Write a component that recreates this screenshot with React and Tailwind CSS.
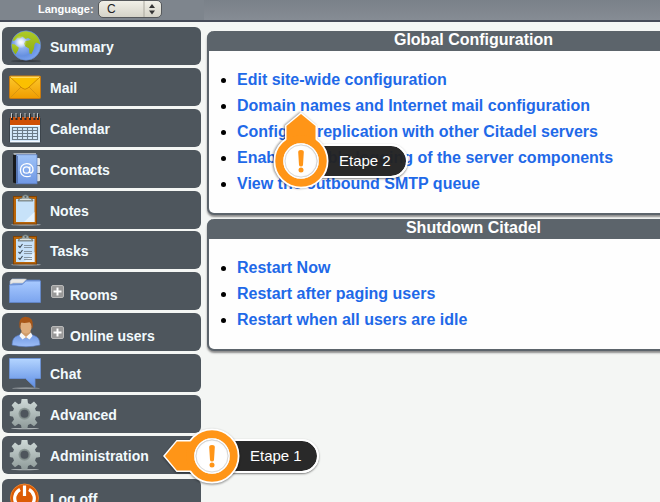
// src/App.jsx
import React from "react";

/* ---------- Sidebar icons ---------- */

const SummaryIcon = () => (
  <svg viewBox="0 0 32 32" className="size-8 shrink-0" aria-hidden="true">
    <defs>
      <radialGradient id="sea" cx="0.36" cy="0.4" r="0.65">
        <stop offset="0" stopColor="#dfe8fb" />
        <stop offset="0.3" stopColor="#8fb0ee" />
        <stop offset="0.7" stopColor="#6690e0" />
        <stop offset="1" stopColor="#7ba4ee" />
      </radialGradient>
      <radialGradient id="glare">
        <stop offset="0" stopColor="#ffffff" stopOpacity="0.95" />
        <stop offset="1" stopColor="#ffffff" stopOpacity="0" />
      </radialGradient>
      <linearGradient id="land" x1="0" y1="0" x2="0" y2="1">
        <stop offset="0" stopColor="#aecb28" />
        <stop offset="1" stopColor="#8fae12" />
      </linearGradient>
    </defs>
    <ellipse cx="17" cy="31" rx="15" ry="0.8" fill="#30353a" />
    <circle cx="17" cy="15.5" r="14.7" fill="url(#sea)" stroke="#5f83c4" strokeWidth="0.6" />
    <path d="M4.5 8 Q9 1.6 17 1.2 Q26.5 2 30 9.5 L31.4 14.5 29 13.2 27 12.5 25.5 14.5 25 18.5 22.5 24 20.5 23.5 20 18.5 16.5 16.5 15 13.5 16.5 11 20 10.5 22 9.5 19 8 16.5 9 13.5 6.8 11 8.5 8.5 8 6 10.5 3.6 11Z" fill="url(#land)" />
    <path d="M2.8 14 L6 14.5 9.8 17.5 9 20.5 6.5 24.5 Q2.5 20 2.8 14Z" fill="url(#land)" />
    <circle cx="11.5" cy="12" r="6.5" fill="url(#glare)" />
  </svg>
);

const MailIcon = () => (
  <svg viewBox="0 0 32 32" className="size-8 shrink-0" aria-hidden="true">
    <defs>
      <linearGradient id="paper" x1="0" y1="0" x2="0" y2="1">
        <stop offset="0" stopColor="#fcc92c" />
        <stop offset="1" stopColor="#f09c00" />
      </linearGradient>
    </defs>
    <rect x="0.5" y="5" width="31" height="22.5" rx="1" fill="url(#paper)" stroke="#c87a10" />
    <path d="M1.5 26.5 L12 16 M30.5 26.5 L20 16" stroke="#d99510" fill="none" />
    <path d="M1 6 L13 17 Q16 19.6 19 17 L31 6" fill="#fbc000" stroke="#d08800" />
    <path d="M2 6.3 H30" stroke="#ffe27a" />
  </svg>
);

const CalendarIcon = () => (
  <svg viewBox="0 0 32 32" className="size-8 shrink-0" aria-hidden="true">
    <rect x="0.5" y="5" width="31" height="26" rx="1" fill="#d9ecfb" stroke="#3c444b" />
    <rect x="1" y="5" width="30" height="8" fill="#cf4f06" />
    <path d="M3 13 H29 V30 H1Z" fill="#d4e9fb" />
    <path d="M1.5 13.5 H30.5 M1.5 29.5 H30.5" stroke="#f4faff" />
    <path d="M3.5 15.5 H28.5 V27.5 H3.5Z M3.5 18.5 H28.5 M3.5 21.5 H28.5 M3.5 24.5 H28.5 M8.5 15.5 V27.5 M13.5 15.5 V27.5 M18.5 15.5 V27.5 M23.5 15.5 V27.5" fill="none" stroke="#6b7b88" strokeWidth="1.1" />
    <path d="M3 8 V2 M7.5 8 V2 M12 8 V2 M16.5 8 V2 M21 8 V2 M25.5 8 V2 M29 8 V2" stroke="#2b2b2b" strokeWidth="2" />
    <path d="M2.5 6 V1 M7 6 V1 M11.5 6 V1 M16 6 V1 M20.5 6 V1 M25 6 V1 M28.5 6 V1" stroke="#c4c4c4" strokeWidth="1" />
  </svg>
);

const ContactsIcon = () => (
  <svg viewBox="0 0 32 32" className="size-8 shrink-0" aria-hidden="true">
    <defs>
      <linearGradient id="cover" x1="0" y1="0" x2="0" y2="1">
        <stop offset="0" stopColor="#9fc3f8" />
        <stop offset="1" stopColor="#6f97e4" />
      </linearGradient>
    </defs>
    <rect x="26" y="5" width="5" height="7.3" rx="1" fill="#e6e9ec" />
    <rect x="26" y="13" width="5" height="7.3" rx="1" fill="#dfe2e5" />
    <rect x="26" y="21" width="5" height="7.3" rx="1" fill="#d7dadd" />
    <path d="M4 1 L8 2 V30.5 L4 29.5Z" fill="#17191c" />
    <path d="M4.5 1 H27" stroke="#e7edf5" strokeWidth="1.2" />
    <rect x="7.5" y="1.8" width="20.5" height="29" fill="url(#cover)" stroke="#5d80c6" strokeWidth="0.7" />
    <path d="M8.5 3 V30" stroke="#4c6aa6" strokeWidth="0.8" />
    <circle cx="17.5" cy="17" r="3.2" fill="none" stroke="#fff" strokeWidth="1.3" />
    <path d="M20.9 13.5 L20.6 18.8 Q21 20.8 23 19.4 Q24.6 17.7 23.8 14.6 Q22 10.5 17.6 10.7 Q11.5 11.3 11.4 17.3 Q11.8 23.6 18 23.7 Q20.3 23.6 21.8 22.7" fill="none" stroke="#fff" strokeWidth="1.3" />
  </svg>
);

const Clipboard = ({ children }) => (
  <svg viewBox="0 0 32 32" className="size-8 shrink-0" aria-hidden="true">
    <ellipse cx="17" cy="30.7" rx="15" ry="0.8" fill="#b7bcc0" />
    <rect x="4.5" y="2.5" width="23" height="27.5" fill="#b96508" stroke="#7f4306" />
    <path d="M7 5 H25.5 V28 H7Z" fill="#c7e2f9" />
    <path d="M25.5 18 V28 H15Z" fill="#e4f2fd" />
    <path d="M9 7 Q9.3 4.2 13 4 Q13.2 0.8 16.5 0.8 Q19.8 0.8 20 4 Q23.7 4.2 24 7Z" fill="#a2aba9" stroke="#5f6866" strokeWidth="0.7" />
    <circle cx="16.5" cy="2.8" r="1.1" fill="#50606a" />
    <path d="M11 5.5 H22" stroke="#dbe2df" />
    {children}
  </svg>
);

const NotesIcon = () => <Clipboard />;

const TasksIcon = () => (
  <Clipboard>
    <g fill="none" strokeWidth="1.1">
      <path d="M15 11.5 H23 M15 13.5 H23 M15 17.5 H23 M15 19.5 H23 M15 23.5 H23 M15 25.5 H23" stroke="#8797a3" strokeWidth="1" />
      <path d="M9.5 12 L11 13.5 13.5 10 M9.5 18 L11 19.5 13.5 16 M9.5 24 L11 25.5 13.5 22" stroke="#3f4b55" />
    </g>
  </Clipboard>
);

const RoomsIcon = () => (
  <svg viewBox="0 0 32 32" className="size-8 shrink-0" aria-hidden="true">
    <defs>
      <linearGradient id="folder" x1="0" y1="0" x2="0" y2="1">
        <stop offset="0" stopColor="#a8caff" />
        <stop offset="1" stopColor="#7ba4ee" />
      </linearGradient>
    </defs>
    <path d="M1 11 V6 L3 4 H15 L17 5 H31 V11Z" fill="#7ba1e4" stroke="#5b7db8" strokeWidth="0.7" />
    <path d="M1.2 9.5 V6 L3 4 H17.5 L14 8 H4Z" fill="#e9e9e7" stroke="#b4b8bb" strokeWidth="0.5" />
    <path d="M0.5 10 L13 9.5 L17 6 H31.5 V27.5 H0.5Z" fill="url(#folder)" stroke="#6389ce" strokeWidth="0.8" />
  </svg>
);

const UsersIcon = () => (
  <svg viewBox="0 0 32 32" className="size-8 shrink-0" aria-hidden="true">
    <defs>
      <linearGradient id="shirt" x1="0" y1="0" x2="0" y2="1">
        <stop offset="0" stopColor="#6d96e2" />
        <stop offset="1" stopColor="#9dbdf7" />
      </linearGradient>
    </defs>
    <path d="M3 29 Q3 21 9 19.5 L12 18 H22 L25 19.5 Q31 21 31 29 Q17 32.5 3 29Z" fill="url(#shirt)" stroke="#5577bb" strokeWidth="0.6" />
    <path d="M12.5 15 H21.5 L22 19 17 22.5 12 19Z" fill="#cf9c6c" />
    <path d="M12 16.5 L17 21 22 16.5 23.5 20 20.5 23.5 17 21 13.5 23.5 10.5 20Z" fill="#f6f7f9" />
    <ellipse cx="17" cy="10.5" rx="5.8" ry="7" fill="#dfad7c" />
    <path d="M10.5 11.5 Q9 1.5 16 0.8 Q25 0.6 23.8 11 L22.8 13 Q22.8 7.5 20.5 6.2 Q15.5 7.5 12 6.5 Q11.2 9 11.3 13Z" fill="#a85617" />
  </svg>
);

const ChatIcon = () => (
  <svg viewBox="0 0 32 32" className="size-8 shrink-0" aria-hidden="true">
    <defs>
      <linearGradient id="bubble" x1="0" y1="0" x2="0" y2="1">
        <stop offset="0" stopColor="#b4d5ff" />
        <stop offset="1" stopColor="#5e8de4" />
      </linearGradient>
    </defs>
    <ellipse cx="17" cy="31.2" rx="14" ry="0.6" fill="#a8adb1" />
    <path d="M0.5 1.5 H31.5 V21.5 H26 V30.5 L16.5 21.5 H0.5Z" fill="url(#bubble)" stroke="#6b93dc" strokeWidth="0.8" />
  </svg>
);

const GearIcon = () => (
  <svg viewBox="0 0 32 32" className="size-8 shrink-0" aria-hidden="true">
    <defs>
      <linearGradient id="steel" x1="0" y1="0" x2="0" y2="1">
        <stop offset="0" stopColor="#cfdad8" />
        <stop offset="1" stopColor="#8f9b9a" />
      </linearGradient>
    </defs>
    <ellipse cx="16" cy="30.6" rx="14" ry="0.7" fill="#aab0b3" />
    <path d="M12.6 1 H18.4 L19 5.2 21.6 6.2 25 3.6 28.4 7.2 26 10.6 27 13 31 13.6 V18 L27 18.8 26 21.4 28.4 24.8 25 28.2 21.6 25.8 19 26.9 18.4 30.6 H12.6 L12 26.9 9.4 25.8 6 28.2 2.6 24.8 5 21.4 4 18.8 0.8 18 V13.6 L4 13 5 10.6 2.6 7.2 6 3.6 9.4 6.2 12 5.2Z" fill="url(#steel)" />
    <circle cx="15.5" cy="15.8" r="6" fill="#8a9694" />
    <circle cx="15.5" cy="15.8" r="5" fill="#7d8987" />
    <circle cx="15.5" cy="15.8" r="4" fill="#4e555c" />
  </svg>
);

const PowerIcon = () => (
  <svg viewBox="0 0 32 32" className="size-8 shrink-0" aria-hidden="true">
    <circle cx="15.5" cy="16" r="14" fill="#dc5c05" stroke="#e8832f" strokeWidth="1" />
    <path d="M11 7.5 A9.8 9.8 0 1 0 20 7.5" fill="none" stroke="#fff" strokeWidth="3.2" />
    <path d="M15.5 3.5 V14" stroke="#fff" strokeWidth="3.2" />
  </svg>
);

/* ---------- Data ---------- */

const menuGroups = [
  [
    { label: "Summary", Icon: SummaryIcon },
    { label: "Mail", Icon: MailIcon },
    { label: "Calendar", Icon: CalendarIcon },
    { label: "Contacts", Icon: ContactsIcon },
    { label: "Notes", Icon: NotesIcon },
  ],
  [
    { label: "Tasks", Icon: TasksIcon },
    { label: "Rooms", Icon: RoomsIcon, expandable: true },
    { label: "Online users", Icon: UsersIcon, expandable: true },
    { label: "Chat", Icon: ChatIcon },
    { label: "Advanced", Icon: GearIcon },
    { label: "Administration", Icon: GearIcon },
  ],
  [{ label: "Log off", Icon: PowerIcon }],
];

const panels = [
  {
    title: "Global Configuration",
    links: [
      "Edit site-wide configuration",
      "Domain names and Internet mail configuration",
      "Configure replication with other Citadel servers",
      "Enable/Disable logging of the server components",
      "View the outbound SMTP queue",
    ],
  },
  {
    title: "Shutdown Citadel",
    links: ["Restart Now", "Restart after paging users", "Restart when all users are idle"],
  },
];

/* ---------- Components ---------- */

const MenuItem = ({ label, Icon, expandable }) => (
  <li className="flex h-[38px] items-center rounded-md bg-[#4e565d] pl-[7px] text-[14px] leading-5 font-bold text-[#f2fafd]">
    <Icon />
    {expandable && (
      <button
        type="button"
        aria-label={`Expand ${label}`}
        className="ml-2.5 flex size-[13px] shrink-0 items-center justify-center rounded-xs border border-[#b9b9b9] bg-[#999999]"
      >
        <svg viewBox="0 0 9 9" className="size-[9px]" aria-hidden="true">
          <path d="M4.5 0.5 V8.5 M0.5 4.5 H8.5" stroke="#fff" strokeWidth="2" />
        </svg>
      </button>
    )}
    <a href="#" className={expandable ? "pt-2 pl-1.5" : "pt-0.5 pl-[9px]"}>
      {label}
    </a>
  </li>
);

const Panel = ({ title, links }) => (
  <section className="rounded-[7px] border-2 border-t-0 border-[#5c646b] bg-[#fefefe] shadow-[0_2px_2px_#8c8c8c]">
    <h2 className="-mx-0.5 h-5 rounded-t-[7px] bg-[#5c646b] text-center text-[16px] leading-[18px] font-bold text-white">
      {title}
    </h2>
    <ul className="list-disc pt-4 pb-4 pl-7 text-[16px] leading-[26px] font-bold text-black">
      {links.map((link) => (
        <li key={link}>
          <a href="#" className="text-[#1f69e8]">
            {link}
          </a>
        </li>
      ))}
    </ul>
  </section>
);

// Ring with an arrow; the arrow points left unless `up` is set
const Pointer = ({ up }) => (
  <svg viewBox="-50 -30 80 60" className="h-[60px] w-20 overflow-visible" aria-hidden="true">
    <circle r="18" fill="#fff" opacity="0.95" />
    <g transform={up ? "rotate(90)" : undefined} fill="none" className="drop-shadow-[0_1px_1px_rgba(0,0,0,0.45)]">
      <path d="M-49 0 L-35.5 -16 H-20 V16 H-35.5Z" fill="#fff" />
      <circle r="22.5" stroke="#fff" strokeWidth="10" />
      <path d="M-47 0 L-35 -14.5 H-19 V14.5 H-35Z" fill="#ff9517" />
      <circle r="21.7" stroke="#ff9517" strokeWidth="8" />
      <circle r="17" stroke="#fff" strokeWidth="1.6" />
    </g>
    <circle r="16" fill="#fff" opacity="0.9" />
    <circle r="16" fill="none" stroke="#d2d2d2" strokeWidth="0.8" />
    <path d="M-2.8 -9 Q-2.8 -11 0 -11 Q2.8 -11 2.8 -9 L2 4 Q1.7 5.5 0 5.5 Q-1.7 5.5 -2 4Z" fill="#ff9517" />
    <circle cy="9" r="2.5" fill="#ff9517" />
  </svg>
);

const Callout = ({ label, up, className }) => (
  <div className={`absolute ${className}`}>
    <div className="absolute top-[13px] left-[50px] flex h-[34px] w-[107px] items-center rounded-r-full border-2 border-white bg-[#222]/97 bg-clip-padding pl-9 text-[15px] leading-5 whitespace-nowrap text-white shadow-[0_1px_2px_rgba(0,0,0,0.5)]">
      {label}
    </div>
    <div className="relative">
      <Pointer up={up} />
    </div>
  </div>
);

const App = () => {
  return (
    <div className="relative h-screen overflow-hidden bg-[#f4f6f4] font-['Liberation_Sans',sans-serif]">
      {/* Top bar */}
      <header className="flex h-[22px] border-b-2 border-[#464b58] bg-[#7e858d]">
        <div className="flex w-[204px] items-start pl-[38px]">
          <label htmlFor="language" className="pt-px text-[11px] leading-4 font-bold text-white">
            Language:
          </label>
          <div className="relative mr-[42px] ml-auto">
            <select
              id="language"
              className="block h-[18px] w-16 appearance-none rounded-[5px] border border-[#55585b] bg-linear-to-b from-[#f1f0e8] to-[#d5d3c8] pl-2 text-[12px] leading-4 text-[#222]"
            >
              <option>C</option>
            </select>
            <svg viewBox="0 0 18 16" className="pointer-events-none absolute top-px right-px h-4 w-[18px]" aria-hidden="true">
              <path d="M1 0 V16" stroke="#aaa89e" />
              <path d="M9 3 L12 7 H6Z M9 13.5 L12 9.5 H6Z" fill="#333" />
            </svg>
          </div>
        </div>
        <div className="flex-1 bg-linear-to-b from-[#7a8189] to-[#868c94]" />
      </header>

      <div className="flex">
        {/* Navigation */}
        <nav className="ml-0.5 w-[199px] shrink-0 pt-[5px]">
          {menuGroups.map((group, idx) => (
            <ul key={idx} className={idx === 2 ? "mt-[5px]" : idx === 1 ? "mt-0.5 space-y-[3px]" : "space-y-[3px]"}>
              {group.map((item) => (
                <MenuItem key={item.label} {...item} />
              ))}
            </ul>
          ))}
        </nav>

        <main className="-mr-20 ml-1.5 min-w-0 flex-1 space-y-1 pt-[9px]">
          {panels.map((panel) => (
            <Panel key={panel.title} {...panel} />
          ))}
        </main>
      </div>

      {/* Step markers */}
      <Callout label="Etape 2" up className="top-[131px] left-[251px]" />
      <Callout label="Etape 1" className="top-[426px] left-[162px]" />
    </div>
  );
};

export default App;
